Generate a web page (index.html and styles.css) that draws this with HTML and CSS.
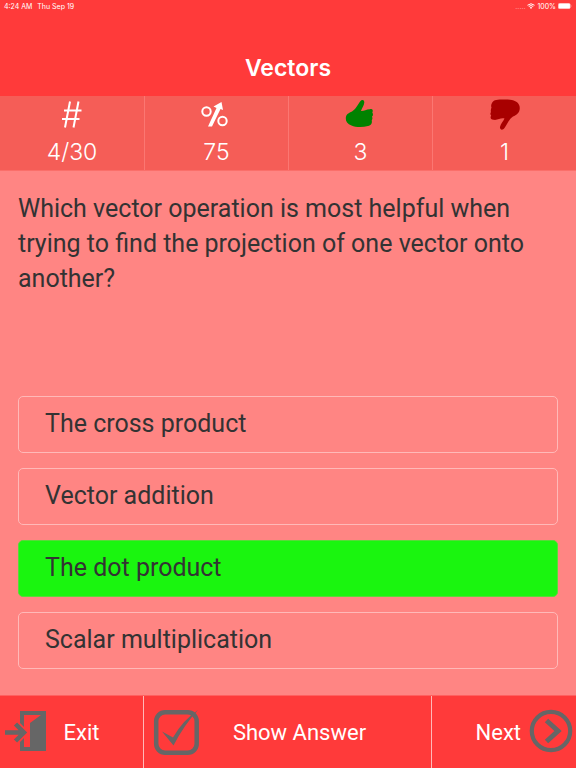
FILE: index.html
```html
<!DOCTYPE html>
<html lang="en">
<head>
<meta charset="utf-8">
<meta name="viewport" content="width=device-width, initial-scale=1">
<title>Vectors</title>
<link rel="stylesheet" href="styles.css">
</head>
<body>
<header class="header">
  <div class="status">
    <span>4:24 AM</span>
    <span>Thu Sep 19</span>
    <span class="status-right">
      <span class="signal">.....</span>
      <svg class="wifi" viewBox="0 0 16 12" aria-hidden="true"><path d="M1 4.500Q8-1.500 15 4.500M3.500 7Q8 3.200 12.500 7" fill="none" stroke="#fff" stroke-width="2"/><path d="M5.500 9Q8 7 10.500 9L8 11.800Z" fill="#fff"/></svg>
      <span>100%</span>
      <svg class="battery" viewBox="0 0 28 12" aria-hidden="true"><rect x=".5" y=".5" width="24" height="11" rx="3" fill="#fff" stroke="#ffb0b0"/><path d="M26 4v4q2-2 0-4" fill="#ffb0b0"/></svg>
    </span>
  </div>
  <h1 class="title">Vectors</h1>
</header>
<section class="stats">
  <div class="stat">
    <svg class="stat-icon" viewBox="0 0 32 32" aria-hidden="true"><path d="M14 2.500L9 28.500M22.500 2.500L17.500 28.500M8 11.500H25.500M6 20H23.500" fill="none" stroke="#fff" stroke-width="2"/></svg>
    <span>4/30</span>
  </div>
  <div class="stat">
    <svg class="stat-icon" viewBox="0 0 32 32" aria-hidden="true"><circle cx="5.500" cy="12.500" r="4.200" fill="none" stroke="#fff" stroke-width="2"/><circle cx="21.500" cy="22" r="4.200" fill="none" stroke="#fff" stroke-width="2"/><path d="M7 27.500L15.500 9L12.500 7.500L20.500 3L22 11L19.500 10L11 27.500Z" fill="#fff"/></svg>
    <span>75</span>
  </div>
  <div class="stat">
    <svg class="stat-icon" viewBox="0 0 32 32" aria-hidden="true"><path d="M.8 19C1 15 4 14 7 12.500C10.500 10.500 13 5.500 15.500 2C16.500 .5 19.500 .2 19.300 3.500C19 6.500 17 9 16 12C18.500 12.500 21.500 10 25 10.200C27.500 9.500 28.500 11.500 27.300 13.500C28.500 15 28 17 27 17.500C28 19.500 27 21 26.700 21.500C27.500 24 26 26.500 23 27C17.500 28.600 10.500 28.300 6.500 26.500C2.500 25 .6 22.500 .8 19Z" fill="#008200"/></svg>
    <span>3</span>
  </div>
  <div class="stat">
    <svg class="stat-icon" viewBox="0 0 32 32" aria-hidden="true"><path d="M3 4C4 1 8 .2 15 .5C22 .3 29 1.500 30.500 7C31.800 13 28 16 24 17.500C20 20 18.500 25 15.500 29C13.500 32 10.500 30.500 11 28C11.500 25 14.500 22 15.500 19.500C11.500 18.500 9 21.500 4.500 20.800C1.500 20.500 1 18.500 2.200 16.500C1.300 15.500 1 14.500 2 13C1.500 11.500 2 10 2.500 8.500C1.800 7 2.200 5 3 4Z" fill="#a80000"/></svg>
    <span>1</span>
  </div>
</section>
<main class="quiz">
  <p class="question">Which vector operation is most helpful when trying to find the projection of one vector onto another?</p>
  <div class="answers">
    <button class="answer" type="button">The cross product</button>
    <button class="answer" type="button">Vector addition</button>
    <button class="answer correct" type="button">The dot product</button>
    <button class="answer" type="button">Scalar multiplication</button>
  </div>
</main>
<footer class="actions">
  <button class="action" type="button">
    <svg class="action-icon" viewBox="0 0 48 48" aria-hidden="true"><path d="M20 15V3H46V43H20V34L24 30V39H30V15L41 7H24V19Z" fill="#666"/><path d="M5 24.500H23M15.500 16L24 24.500L15.500 33" fill="none" stroke="#666" stroke-width="4.500"/></svg>
    <span class="label">Exit</span>
  </button>
  <button class="action show" type="button">
    <svg class="action-icon" viewBox="0 0 48 48" aria-hidden="true"><rect x="4.200" y="4.200" width="40.500" height="40.500" rx="9" fill="none" stroke="#666" stroke-width="4.500"/><path d="M10 23.500L21 29.500Q31 12 46 2Q32 17 21.500 37.500Z" fill="#666"/></svg>
    <span class="label">Show Answer</span>
  </button>
  <button class="action next" type="button">
    <span class="label">Next</span>
    <svg class="action-icon" viewBox="0 0 48 48" aria-hidden="true"><circle cx="24" cy="23" r="19.200" fill="none" stroke="#666" stroke-width="4.200"/><path d="M19.500 12.500L31 23L19.500 33.500" fill="none" stroke="#666" stroke-width="5"/></svg>
  </button>
</footer>
</body>
</html>
```
FILE: styles.css
```css
* { box-sizing: border-box; }
body {
  margin: 0;
  min-height: 100vh;
  display: flex;
  flex-direction: column;
  background: #ff8583;
  color: #333;
  font-family: Roboto, "Liberation Sans", sans-serif;
}
button { font: inherit; color: inherit; }
.header, .stats { font-family: Inter, "Liberation Sans", sans-serif; }
.header { background: #ff3a3a; color: #fff; height: 96px; }
.status {
  display: flex;
  align-items: center;
  gap: 5px;
  height: 12px;
  padding: 0 4px;
  font-size: 7px;
}
.status-right { display: flex; align-items: center; gap: 2px; margin-left: auto; }
.signal { color: #ff9a9a; }
.wifi { width: 8px; height: 6px; }
.battery { width: 14px; height: 6px; }
.title {
  margin: 40px 0 0;
  text-align: center;
  font-size: 23px;
  line-height: 32px;
  font-weight: 600;
}
.stats {
  display: grid;
  grid-template-columns: repeat(4, 1fr);
  height: 75px;
  background: #f55d57;
  border-bottom: 1px solid #fa6f6a;
  color: #fff;
}
.stat {
  display: flex;
  flex-direction: column;
  align-items: center;
  gap: 6px;
  padding-top: 3px;
  border-left: 1px solid #fb7772;
  font-size: 23px;
  line-height: 30px;
  font-weight: 300;
}
.stat:first-child { border-left: 0; }
.stat-icon { width: 32px; height: 32px; }
.quiz {
  flex: 1;
  display: flex;
  flex-direction: column;
  padding: 20px 18px 26px;
}
.question { margin: 0; font-size: 25px; line-height: 35px; }
.answers {
  display: flex;
  flex-direction: column;
  gap: 15px;
  margin-top: auto;
  padding-top: 20px;
}
.answer {
  min-height: 57px;
  padding: 11px 26px 13px;
  border: 1px solid #ffb9b8;
  border-radius: 5px;
  background: none;
  text-align: left;
  font-size: 25px;
  line-height: 31px;
}
.correct { background: #1af50f; border-color: #58d93a; }
.actions {
  display: grid;
  grid-template-columns: 1fr 2fr 1fr;
  height: 73px;
  background: #ff3a3a;
  border-top: 1px solid #ff605f;
  color: #fff;
}
.action {
  display: flex;
  align-items: center;
  padding: 0 28px 0 0;
  border: 0;
  border-right: 1px solid #ffb9b8;
  background: none;
  font-size: 22px;
}
.show { padding: 0 32px 0 8px; }
.next { border-right: 0; padding: 0 1px 0 0; }
.action-icon { width: 48px; height: 48px; flex: none; }
.label { flex: 1; text-align: center; }
.next .label { text-align: right; padding-right: 6px; }
```
